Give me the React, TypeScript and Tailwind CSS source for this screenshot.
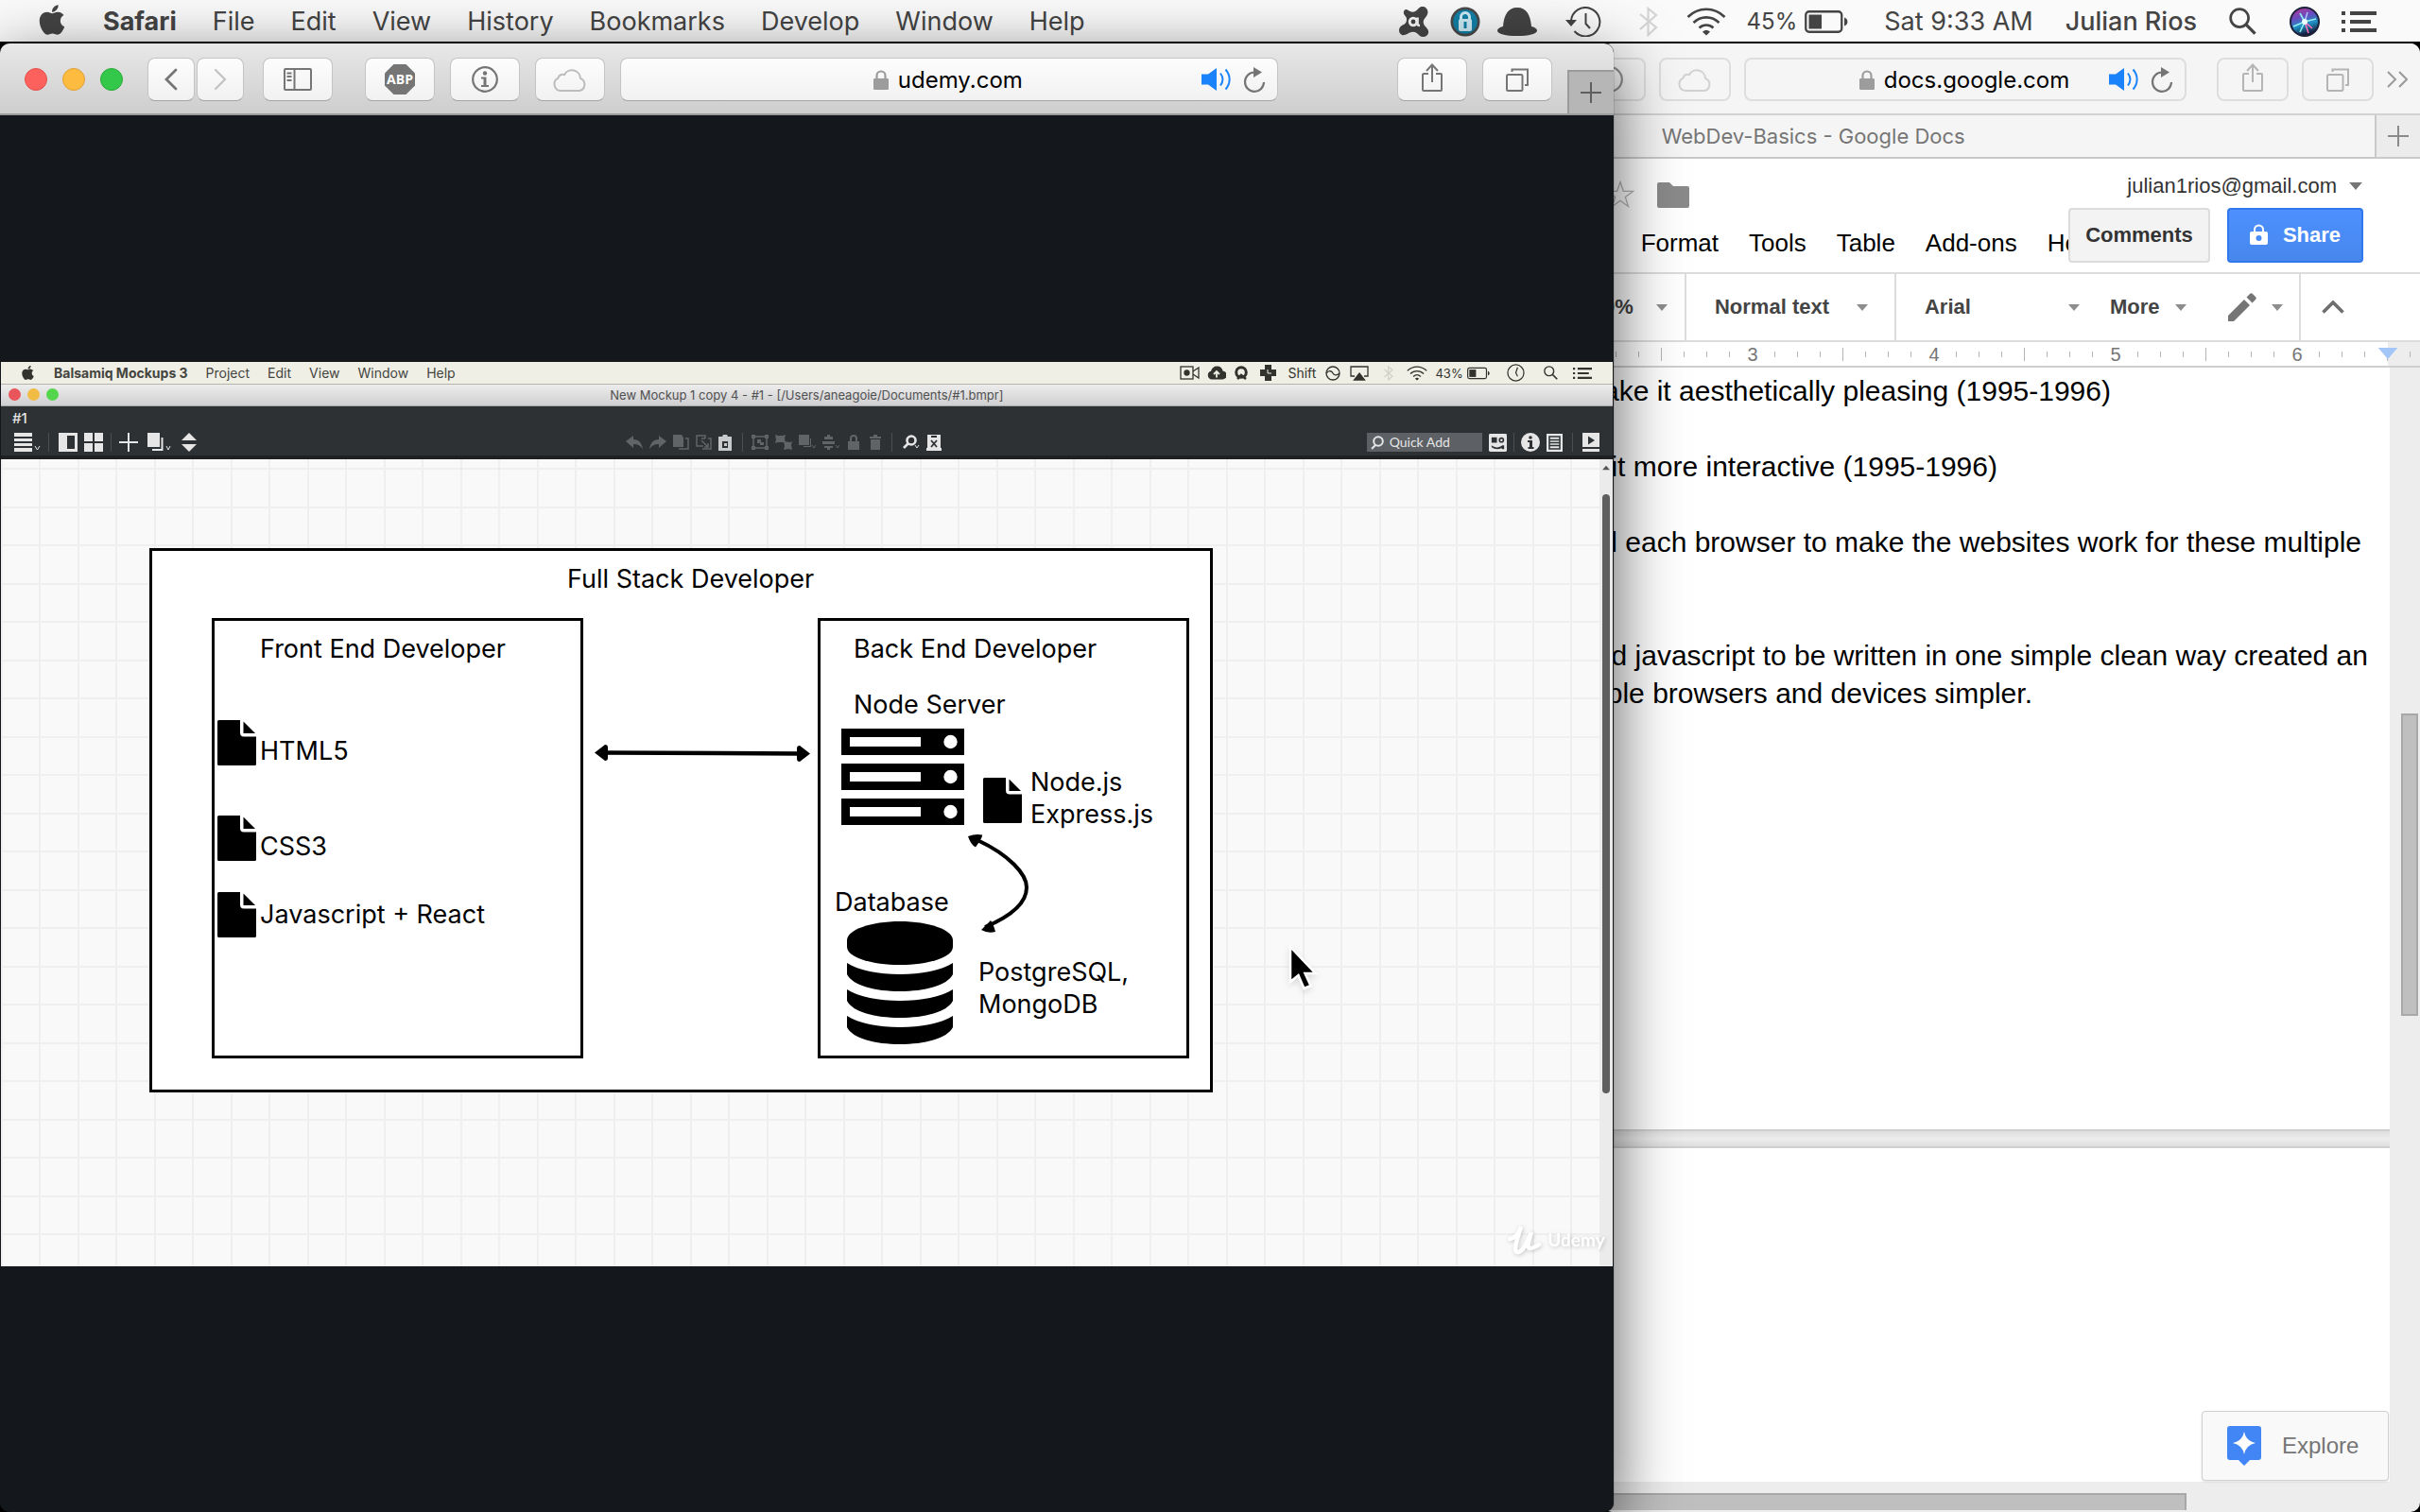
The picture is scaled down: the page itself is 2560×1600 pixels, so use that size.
import React from "react";
import { FaApple } from "react-icons/fa";

type SvgProps = { className?: string };

/* ---------- shared icons ---------- */

const Wifi = ({ className }: SvgProps) => (
  <svg viewBox="0 0 42 30" className={className} fill="none" stroke="currentColor" strokeWidth="2.6" aria-hidden="true">
    <path d="M1.5 10C12.5-1 29.500-1 40.500 10" />
    <path d="M7.500 16C15 8.500 27 8.500 34.500 16" />
    <path d="M13.500 21.500C18 17.500 24 17.500 28.500 21.500" />
    <path d="M21 29.500l-4-3.700c2-2.400 6-2.400 8 0z" fill="currentColor" stroke="none" />
  </svg>
);

const Bluetooth = ({ className }: SvgProps) => (
  <svg viewBox="0 0 20 32" className={className} fill="none" stroke="currentColor" strokeWidth="2.200" aria-hidden="true">
    <path d="M1 8l17 14-8.500 8V2L18 9 1 24" />
  </svg>
);

const Battery = ({ className }: SvgProps) => (
  <svg viewBox="0 0 46 24" className={className} aria-hidden="true">
    <rect x="1.250" y="1.250" width="38" height="21.500" rx="3.500" fill="none" stroke="currentColor" strokeWidth="2.300" />
    <rect x="4.500" y="4.500" width="13.500" height="15" fill="currentColor" />
    <path d="M42 7.500c4.500 1 4.500 8 0 9z" fill="currentColor" />
  </svg>
);

const Magnifier = ({ className }: SvgProps) => (
  <svg viewBox="0 0 30 30" className={className} fill="none" stroke="currentColor" strokeWidth="2.800" aria-hidden="true">
    <circle cx="11.500" cy="11.500" r="9.800" />
    <path d="M18.500 18.500l10 10" strokeWidth="3.400" />
  </svg>
);

const MenuList = ({ className }: SvgProps) => (
  <svg viewBox="0 0 37 22" className={className} fill="currentColor" aria-hidden="true">
    <path d="M0 0h4v4H0zM9 0h28v4H9zM0 9h4v4H0zM9 9h22v4H9zM0 18h4v4H0zM9 18h28v4H9z" />
  </svg>
);

const Lock = ({ className }: SvgProps) => (
  <svg viewBox="0 0 16 21" className={className} aria-hidden="true">
    <path d="M3.500 10V6a4.500 4.500 0 019 0v4" fill="none" stroke="currentColor" strokeWidth="2.200" />
    <rect y="9" width="16" height="12" rx="1.200" fill="currentColor" />
  </svg>
);

const Speaker = ({ className }: SvgProps) => (
  <svg viewBox="0 0 32 24" className={className} aria-hidden="true">
    <path d="M0 6.500h7L16 0v24L7 17.500H0z" fill="currentColor" />
    <path d="M20 5.500c3 4 3 9 0 13M25.500 1.500c5.500 6.500 5.500 14.500 0 21" fill="none" stroke="currentColor" strokeWidth="2" />
  </svg>
);

const Reload = ({ className }: SvgProps) => (
  <svg viewBox="0 0 24 28" className={className} aria-hidden="true">
    <path d="M12 6.500A10 10.200 0 1022 17" fill="none" stroke="currentColor" strokeWidth="2.200" />
    <path d="M11 1l9 5.500-9 5.500z" fill="currentColor" />
  </svg>
);

const Cloud = ({ className }: SvgProps) => (
  <svg viewBox="0 0 36 25" className={className} fill="none" stroke="currentColor" strokeWidth="2" strokeLinejoin="round" aria-hidden="true">
    <path d="M8 24a7 7 0 01-2.500-13.300A4.500 4.500 0 0112 7.200 9 9 0 0129 11a6.800 6.800 0 01-1 13z" />
  </svg>
);

const Info = ({ className }: SvgProps) => (
  <svg viewBox="0 0 28 28" className={className} aria-hidden="true">
    <circle cx="14" cy="14" r="12.800" fill="none" stroke="currentColor" strokeWidth="2.200" />
    <circle cx="14" cy="7.500" r="2.200" fill="currentColor" />
    <path d="M10 11.500h5.500V20H18v2h-8v-2h2.500v-6.500H10z" fill="currentColor" />
  </svg>
);

const Share = ({ className }: SvgProps) => (
  <svg viewBox="0 0 24 30" className={className} fill="none" stroke="currentColor" strokeWidth="2" aria-hidden="true">
    <path d="M8 11H3.500C2 11 2 12 2 12v16c0 1 1 1 1 1h18c1 0 1-1 1-1V12c0-1-1-1-1-1h-5M12 20V2M6 8l6-6.500L18 8" />
  </svg>
);

const Tabs = ({ className }: SvgProps) => (
  <svg viewBox="0 0 24 25" className={className} fill="none" stroke="currentColor" strokeWidth="2" aria-hidden="true">
    <rect x="1" y="7" width="16.500" height="17" rx="1.500" />
    <path d="M6.500 4V1.500H23V18h-3" />
  </svg>
);

const Plus = ({ className }: SvgProps) => (
  <svg viewBox="0 0 22 22" className={className} stroke="currentColor" strokeWidth="2" aria-hidden="true">
    <path d="M11 0v22M0 11h22" />
  </svg>
);

const Caret = ({ className }: SvgProps) => (
  <svg viewBox="0 0 12 7" className={className} fill="currentColor" aria-hidden="true">
    <path d="M0 0h12L6 7z" />
  </svg>
);

/* ---------- system menu bar ---------- */

const safariMenus = ["File", "Edit", "View", "History", "Bookmarks", "Develop", "Window", "Help"];

const SystemBar = () => (
  <header className="flex h-11 shrink-0 items-center bg-[#fafafa] pt-px pr-[46px] pl-[41px] text-[27px] leading-8 whitespace-nowrap text-[#444]">
    <button aria-label="Apple menu" className="mr-10 -mt-1"><FaApple className="h-9 w-7" /></button>
    <nav className="flex gap-[38px]">
      <button className="font-bold">Safari</button>
      {safariMenus.map((m) => <button key={m}>{m}</button>)}
    </nav>
    <div className="ml-auto flex items-center">
      <svg viewBox="0 0 32 32" className="mr-[22px] size-8" aria-hidden="true">
        <path d="M8 3c2 1 5 4 9 2 3-1 4-6 9-5 4 1 6 6 3 10-2 3-4 4-3 8 1 4 6 5 5 10-1 4-6 5-9 3-3-3-5-5-9-4-4 1-6 4-10 3-4-2-4-8 0-10 4-2 5-3 5-7 0-3-4-4-3-8 1-2 2-2 3-2z" fill="#444" />
        <circle cx="15" cy="16" r="3.800" fill="none" stroke="#fafafa" strokeWidth="2.800" />
        <path d="M19.500 11.500V18c0 2 1 2 2.500 2" fill="none" stroke="#fafafa" strokeWidth="2.600" />
      </svg>
      <svg viewBox="0 0 32 32" className="mr-[18px] size-8" aria-hidden="true">
        <circle cx="16" cy="16" r="15.500" fill="#4a4a4a" />
        <circle cx="16" cy="16" r="12.800" fill="#1280a6" />
        <path d="M11.500 14v-3a4.500 4.500 0 019 0v3" fill="none" stroke="#cdeaf4" strokeWidth="3" />
        <rect x="9" y="13" width="14" height="13" rx="2" fill="#cdeaf4" />
        <rect x="14.500" y="16" width="3" height="7" fill="#1280a6" />
      </svg>
      <svg viewBox="0 0 42 30" className="mr-[30px] h-[30px] w-[42px]" fill="#444" aria-hidden="true">
        <path d="M6 20C7 8 11 0 21 0s14 8 15 20c4 1 6 2.500 6 4.500 0 3.500-9 5.500-21 5.500S0 28 0 24.500C0 22.500 2 21 6 20z" />
      </svg>
      <svg viewBox="0 0 38 32" className="mr-10 h-8 w-[38px]" fill="none" stroke="#444" strokeWidth="2" aria-hidden="true">
        <path d="M6 15A15.200 15.200 0 119.500 26M21.500 7v11l4.500 5" />
        <path d="M0 14h12l-6 7z" fill="#444" stroke="none" />
      </svg>
      <Bluetooth className="mr-[30px] h-8 w-5 text-[#d4d4d4]" />
      <Wifi className="mr-[22px] h-[30px] w-[42px]" />
      <span className="mr-2 text-2xl">45%</span>
      <Battery className="mr-[38px] h-6 w-[46px]" />
      <time className="mr-[34px]">Sat 9:33 AM</time>
      <button className="mr-[34px] font-medium">Julian Rios</button>
      <Magnifier className="mr-[35px] size-[29px]" />
      <svg viewBox="0 0 32 32" className="mr-[23px] size-8" aria-hidden="true">
        <defs>
          <linearGradient id="siri" x1="0" y1="0" x2="0.300" y2="1">
            <stop offset="0" stopColor="#c0358f" />
            <stop offset="0.400" stopColor="#6a4bc0" />
            <stop offset="0.700" stopColor="#1d8fc4" />
            <stop offset="1" stopColor="#16203f" />
          </linearGradient>
        </defs>
        <circle cx="16" cy="16" r="15" fill="url(#siri)" stroke="#1c2038" strokeWidth="2" />
        <path d="M16 16L11 7M16 16L4 21M16 16l12-3M16 16l-5 11" stroke="#8ff0f0" strokeWidth="1.600" />
        <path d="M16 16l4 12M16 16l8 7" stroke="#ff6fb4" strokeWidth="1.600" />
        <path d="M16 16l3-10" stroke="#b9c8ff" strokeWidth="1.400" />
        <circle cx="16" cy="16" r="3" fill="#e8ffff" />
      </svg>
      <MenuList className="h-[22px] w-[37px]" />
    </div>
  </header>
);

/* ---------- Safari toolbar pieces ---------- */

const ToolButton = ({ label, children, className = "w-[74px]" }: { label: string; children: React.ReactNode; className?: string }) => (
  <button aria-label={label} className={`flex h-[46px] shrink-0 items-center justify-center rounded-lg border border-[#c4c4c4] border-b-[#a5a5a5] bg-linear-to-b from-[#fdfdfd] to-[#f1f1f1] text-[#757575] ${className}`}>
    {children}
  </button>
);

const FlatButton = ({ label, children }: { label: string; children: React.ReactNode }) => (
  <button aria-label={label} className="flex h-[46px] w-[76px] shrink-0 items-center justify-center rounded-lg border-2 border-[#dedede] text-[#b4b4b4]">
    {children}
  </button>
);

const AddressBar = ({ host, className }: { host: string; className: string }) => (
  <div className={`flex h-[46px] items-center rounded-lg ${className}`}>
    <div className="flex-1" />
    <label className="flex items-center gap-2.5 pl-2.5">
      <Lock className="h-[21px] w-4 text-[#9c9c9c]" />
      <input aria-label="Address" defaultValue={host} className="field-sizing-content pt-0.5 text-2xl leading-8 text-black outline-none" />
    </label>
    <div className="flex flex-1 items-center justify-end gap-3 pr-3">
      <Speaker className="h-6 w-8 text-[#1a82fb]" />
      <Reload className="h-7 w-6 text-[#757575]" />
    </div>
  </div>
);

/* ---------- video: Balsamiq ---------- */

const BalsamiqMenuBar = () => (
  <div className="flex h-6 items-center border-b border-[#b4b4aa] bg-[#efefe6] pt-px pr-[22px] pl-[21px] text-sm leading-5 whitespace-nowrap text-[#44443e]">
    <FaApple className="mr-5 h-[17px] w-[15px] shrink-0 text-[#33332e]" />
    <div className="flex gap-[19px]">
      <span className="font-bold">Balsamiq Mockups 3</span>
      {["Project", "Edit", "View", "Window", "Help"].map((m) => <span key={m}>{m}</span>)}
    </div>
    <div className="ml-auto flex items-center text-[#33332e]">
      <svg viewBox="0 0 21 15" className="mr-2 h-[15px] w-[21px]" fill="none" stroke="currentColor" strokeWidth="1.300"><rect x="1" y="1" width="13" height="13" /><path d="M14 6l6-4v11l-6-4" /><circle cx="7.500" cy="7.500" r="2.500" fill="currentColor" /></svg>
      <svg viewBox="0 0 20 14" className="mr-2 h-[15px] w-5" fill="currentColor"><path d="M5 14a4.500 4.500 0 01-1-8.800C5 2 7 0 10.500 0S16 2 16.500 5A4.500 4.500 0 0116 14z" /><path d="M10 12V6M7 8.500L10 5.500l3 3" fill="none" stroke="#efefe6" strokeWidth="1.800" /></svg>
      <svg viewBox="0 0 16 15" className="mr-3 h-[15px] w-4" fill="none" stroke="currentColor" strokeWidth="3"><circle cx="8" cy="7" r="5.300" /><path d="M4 14l4-4 5 4" strokeWidth="2.600" /></svg>
      <svg viewBox="0 0 17 17" className="mr-3 size-[17px]" fill="currentColor"><path d="M5 0h7v5h5v7h-5v5H5v-5H0V5h5z" /><path d="M8 5v4h4" stroke="#efefe6" fill="none" /></svg>
      <span className="mr-2 w-8">Shift</span>
      <svg viewBox="0 0 16 16" className="mr-2.5 size-4" fill="none" stroke="currentColor" strokeWidth="1.300"><circle cx="8" cy="8" r="7" /><path d="M1 8c3-4 6-2 7 0s4 3 7 0" /></svg>
      <svg viewBox="0 0 20 16" className="mr-4 h-4 w-5" fill="none" stroke="currentColor" strokeWidth="1.300"><path d="M5 11H1V1h18v10h-4" /><path d="M10 8l5.500 7h-11z" fill="currentColor" /></svg>
      <Bluetooth className="mr-3.5 h-4 w-[10px] text-[#cfcfc6]" />
      <Wifi className="mr-2 h-4 w-[22px]" />
      <span className="mr-1 text-[13px]">43%</span>
      <Battery className="mr-[18px] h-3.5 w-6" />
      <svg viewBox="0 0 20 20" className="mr-5 size-[19px]" fill="none" stroke="currentColor" strokeWidth="1.300"><circle cx="10" cy="10" r="9" /><path d="M12 4l-2 6 2 4" /></svg>
      <Magnifier className="mr-4 size-[15px]" />
      <MenuList className="h-3 w-5" />
    </div>
  </div>
);

const Sep = () => <span className="h-5 w-px bg-[#4b4f51]" />;

const BalsamiqToolbar = () => (
  <div className="flex h-[56px] flex-col border-b-4 border-[#1f2022] bg-[#2d3133] text-[#e6e6e6]">
    <div className="h-[25px] pl-3 text-[15px] leading-[26px] font-medium">#1</div>
    <div className="flex h-[27px] items-center pr-3.5 pl-3.5">
      <div className="flex flex-1 items-center">
        <svg viewBox="0 0 28 22" className="mr-2 h-[22px] w-7" fill="currentColor"><path d="M0 1h19v4H0zM0 7h19v3H0zM0 12h19v3H0zM0 17h19v4H0z" /><path d="M22 15l2.500 4L27 15" fill="none" stroke="currentColor" /></svg>
        <Sep />
        <svg viewBox="0 0 20 20" className="mr-[7px] ml-2.5 size-5"><path d="M0 0h20v20H0zM9 3v14h8V3z" fillRule="evenodd" fill="currentColor" /></svg>
        <svg viewBox="0 0 20 20" className="mr-2 size-5" fill="currentColor"><path d="M0 0h9v9H0zM11 0h9v9h-9zM0 11h9v9H0zM11 11h9v9h-9z" /></svg>
        <Sep />
        <svg viewBox="0 0 20 20" className="mr-2.5 ml-2 size-5" fill="none" stroke="currentColor" strokeWidth="2"><path d="M10 0v20M0 10h20" /></svg>
        <svg viewBox="0 0 26 20" className="mr-2.5 h-5 w-[26px]" fill="currentColor"><path d="M0 0h13v15H0z" /><path d="M15.500 5v13H5" fill="none" stroke="currentColor" strokeWidth="2" /><path d="M20 14l2 4 2-4" fill="none" stroke="currentColor" /></svg>
        <svg viewBox="0 0 16 20" className="h-5 w-4" fill="currentColor"><path d="M0 8l8-8 8 8zM0 12h16l-8 8z" /></svg>
      </div>
      <div className="mr-12 flex items-center gap-[7px] text-[#616466]">
        <svg viewBox="0 0 18 14" className="h-3.5 w-[18px]" fill="currentColor"><path d="M0 6l8-6v4c6 0 9 4 10 10-3-4-6-5-10-5v4z" /></svg>
        <svg viewBox="0 0 18 14" className="h-3.5 w-[18px]" fill="currentColor"><path d="M18 6l-8-6v4C4 4 1 8 0 14c3-4 6-5 10-5v4z" /></svg>
        <svg viewBox="0 0 17 16" className="h-4 w-[17px]" fill="currentColor"><path d="M0 0h9l2 3v10H0z" /><path d="M13 4h3v11H6" fill="none" stroke="currentColor" strokeWidth="1.500" /></svg>
        <svg viewBox="0 0 17 16" className="h-4 w-[17px]" fill="none" stroke="currentColor" strokeWidth="1.500"><path d="M8 12H1V1h9v3M6 4h4M13 4h3v11H7M6 6l7 7M13 9v4H9" /></svg>
        <svg viewBox="0 0 14 17" className="mr-1 h-[17px] w-3.5 text-[#c8c9ca]" fill="currentColor"><path d="M0 2h4l1-2h4l1 2h4v15H0zM4 7v7h6V7z" fillRule="evenodd" /><path d="M6 9h3v3H6z" /></svg>
        <Sep />
        <svg viewBox="0 0 18 16" className="ml-0.5 h-4 w-[18px]" fill="none" stroke="currentColor" strokeWidth="1.500"><path d="M2 2h14v12H2z" /><path d="M0 0h4v4H0zM14 0h4v4h-4zM0 12h4v4H0zM14 12h4v4h-4zM6 5h4v4H6zM9 8h4v3H9z" fill="currentColor" stroke="none" /></svg>
        <svg viewBox="0 0 18 16" className="h-4 w-[18px]" fill="currentColor"><path d="M0 0l3 1h5l3-1-1 4 1 5-3-1H3L0 9l1-4zM9 7l7 1 2-1-1 4 1 5-4-1-5 1 1-4z" /></svg>
        <svg viewBox="0 0 18 16" className="h-4 w-[18px]" fill="currentColor"><path d="M0 0h11v11H0zM12 4h1v9H5v-1h7z" /><path d="M14 11l2 3 2-3" fill="none" stroke="currentColor" /></svg>
        <svg viewBox="0 0 18 16" className="h-4 w-[18px]" fill="currentColor"><path d="M2 2h3V0h3v2h3v3H2zM0 7h13v3H0zM2 12h9v2H8v2H5v-2H2z" /><path d="M14 11l2 3 2-3" fill="none" stroke="currentColor" /></svg>
        <svg viewBox="0 0 12 16" className="ml-0.5 h-4 w-3" fill="currentColor"><path d="M0 7h12v9H0z" /><path d="M3 7V4a3 3 0 016 0v3" fill="none" stroke="currentColor" strokeWidth="2" /></svg>
        <svg viewBox="0 0 12 16" className="mx-1 h-4 w-3" fill="currentColor"><path d="M0 2h4V0h4v2h4v2H0zM1 5h10v11H1z" /></svg>
        <Sep />
        <svg viewBox="0 0 18 16" className="ml-1 h-4 w-[18px] text-[#e6e6e6]" fill="none" stroke="currentColor" strokeWidth="2.600"><circle cx="9" cy="6" r="4.500" /><path d="M6 9l-5 5" /><path d="M13 11l2 3 2-3" strokeWidth="1" /></svg>
        <svg viewBox="0 0 16 17" className="h-[17px] w-4 text-[#e6e6e6]" fill="currentColor"><path d="M1 0h14v14h1v3H0v-3h1z" /><path d="M5 2h6M5 6l6 7M11 6l-6 7" stroke="#2d3133" strokeWidth="1.800" /></svg>
      </div>
      <div className="flex flex-1 items-center justify-end">
        <label className="mr-[7px] flex h-5 w-[122px] items-center gap-1.5 bg-[#5d6065] pl-1">
          <svg viewBox="0 0 14 15" className="h-[15px] w-3.5 shrink-0" fill="none" stroke="currentColor" strokeWidth="2"><circle cx="8" cy="6" r="4.800" /><path d="M5 10l-4 4" /></svg>
          <input aria-label="Quick Add" placeholder="Quick Add" className="w-20 font-[Lato] text-sm leading-5 outline-none placeholder:text-[#e6e6e6]" />
        </label>
        <svg viewBox="0 0 20 20" className="mr-[7px] size-[19px]"><rect width="20" height="20" rx="1.500" fill="currentColor" /><g fill="#2d3133"><path d="M3 4h6v6H3z" /><circle cx="14" cy="7" r="3" /><path d="M3 13c4 3 8 3 12 0h2v4h-2l-1-1c-4 2-8 1-11-1z" /></g><circle cx="14" cy="7" r="1.300" fill="currentColor" /></svg>
        <Sep />
        <svg viewBox="0 0 20 20" className="mx-[7px] size-5"><circle cx="10" cy="10" r="10" fill="currentColor" /><g fill="#2d3133"><circle cx="10" cy="5" r="1.800" /><path d="M7 8h5v7h1.500v2h-6v-2H9v-5H7z" /></g></svg>
        <svg viewBox="0 0 17 19" className="mr-2.5 h-[19px] w-[17px]"><path d="M0 0h17v19H0z" fill="currentColor" /><path d="M3 3h11v13H3zM3 6.500h11M3 9.500h11M3 12.500h11" fill="none" stroke="#2d3133" strokeWidth="1.500" /></svg>
        <Sep />
        <svg viewBox="0 0 18 20" className="ml-2.5 h-5 w-[18px]"><path d="M0 0h18v15H0zM0 17h18v3H0z" fill="currentColor" /><path d="M6 3.500l7 4.500-7 4.500z" fill="#2d3133" /></svg>
      </div>
    </div>
  </div>
);

const FileShape = ({ className }: { className: string }) => (
  <svg viewBox="0 0 41 48" className={`absolute h-12 w-[41px] ${className}`} aria-hidden="true">
    <path d="M1.500 0H24v13.500q0 4 4 4h13v29q0 1.500-1.500 1.500h-38Q0 48 0 46.500v-45Q0 0 1.500 0z" />
    <path d="M27.500 1.500L40 14H27.500z" />
  </svg>
);

const ServerUnit = ({ y }: { y: number }) => (
  <g transform={`translate(0 ${y})`}>
    <rect width="130" height="28" />
    <rect x="9" y="9" width="75" height="10" fill="#fff" />
    <circle cx="115.500" cy="14" r="7.200" fill="#fff" />
  </g>
);

const Diagram = () => (
  <div className="absolute inset-0 text-[27px] leading-[34px] whitespace-nowrap text-black">
    <div className="absolute top-[94px] left-[157px] h-[576px] w-[1125px] border-[3px] border-black bg-white" />
    <div className="absolute top-[168px] left-[223px] h-[466px] w-[393px] border-[3px] border-black bg-white" />
    <div className="absolute top-[168px] left-[864px] h-[466px] w-[393px] border-[3px] border-black bg-white" />

    <div className="absolute top-[110px] left-[599px]">Full Stack Developer</div>
    <div className="absolute top-[184px] left-[274px]">Front End Developer</div>
    <div className="absolute top-[292px] left-[274px]">HTML5</div>
    <div className="absolute top-[393px] left-[274px]">CSS3</div>
    <div className="absolute top-[465px] left-[274px]">Javascript + React</div>
    <div className="absolute top-[184px] left-[902px]">Back End Developer</div>
    <div className="absolute top-[243px] left-[902px]">Node Server</div>
    <div className="absolute top-[325px] left-[1089px]">Node.js<br />Express.js</div>
    <div className="absolute top-[452px] left-[882px]">Database</div>
    <div className="absolute top-[526px] left-[1034px]">PostgreSQL,<br />MongoDB</div>

    <FileShape className="top-[276px] left-[229px]" />
    <FileShape className="top-[377px] left-[229px]" />
    <FileShape className="top-[458px] left-[229px]" />
    <FileShape className="top-[337px] left-[1039px]" />

    <svg viewBox="0 0 130 102" className="absolute top-[285px] left-[889px] h-[102px] w-[130px]" aria-hidden="true">
      <ServerUnit y={0} />
      <ServerUnit y={37} />
      <ServerUnit y={74} />
    </svg>

    <svg viewBox="0 0 112 130" className="absolute top-[489px] left-[895px] h-[130px] w-[112px]" aria-hidden="true">
      <path d="M0 20C0 9 25 0 56 0s56 9 56 20v7c0 11-25 19-56 19S0 38 0 27z" />
      <path d="M0 44c12 8 34 12 56 12s44-4 56-12v12c-6 12-30 18-56 18S6 68 0 56z" />
      <path d="M0 72c12 8 34 12 56 12s44-4 56-12v12c-6 12-30 18-56 18S6 96 0 84z" />
      <path d="M0 100c12 8 34 12 56 12s44-4 56-12v12c-6 12-30 18-56 18s-50-6-56-18z" />
    </svg>

    <svg viewBox="0 0 228 18" className="absolute top-[302px] left-[628px] h-[18px] w-[228px]" aria-hidden="true">
      <path d="M10 8.500L218 9.500" stroke="#000" strokeWidth="4.500" />
      <path d="M0 8.500L11 0q3 0 3 3v11q0 3-3 3zM228 9.500L217 1q-3 0-3 3v11q0 3 3 3z" />
    </svg>

    <svg viewBox="0 0 70 104" className="absolute top-[397px] left-[1023px] h-[104px] w-[70px]" aria-hidden="true">
      <path d="M10 6C44 22 62 42 62 56c0 18-20 32-44 42" fill="none" stroke="#000" strokeWidth="4" />
      <path d="M0 2q8-3 15-1.500 1 2-7 13Q3 11 0 2zM14 101L24 91q3 4 5 12-8 2-15-2z" />
    </svg>
  </div>
);

const Canvas = () => (
  <div className="relative h-[854px] overflow-hidden bg-[#f9f9f9]">
    <div className="absolute inset-0 bg-[linear-gradient(90deg,#efefef_2px,transparent_2px,transparent_40px,#efefef_40px,#efefef_42px,transparent_42px),linear-gradient(180deg,transparent_9px,#efefef_9px,#efefef_11px,transparent_11px,transparent_50px,#efefef_50px,#efefef_52px,transparent_52px)] bg-size-[81px_81px]" />
    <Diagram />
    <div className="absolute inset-y-0 right-0 flex w-3.5 flex-col items-center bg-[#ebebeb]">
      <Caret className="mt-1.5 h-1.5 w-2 rotate-180 text-[#555]" />
      <div className="mt-[25px] h-[634px] w-2 rounded-full bg-[#5e5e5e]" />
    </div>
    <svg viewBox="0 0 32 52" className="absolute top-[513px] left-[1361px] h-[52px] w-8 drop-shadow-md" aria-hidden="true">
      <path d="M3 3v37l8.500-7 6 14 7-3-6-13h11z" fill="#000" stroke="#fff" strokeWidth="2.500" />
    </svg>
    <div className="absolute right-2 bottom-3 flex items-center gap-1.5 font-[Lato] text-[19px] leading-8 font-bold text-white [filter:drop-shadow(1px_1px_2px_rgb(0_0_0_/_0.2))]">
      <svg viewBox="0 0 36 32" className="h-8 w-9" fill="none" stroke="#fff" strokeWidth="4.500" strokeLinecap="round" aria-hidden="true">
        <path d="M2 15c6-1 10-6 12-13-3 10-9 26-4 27 6 1 12-14 15-21-3 9-5 16-2 17 3 0 7-2 10-4" />
      </svg>
      Udemy
    </div>
  </div>
);

const Video = () => (
  <section aria-label="Lecture video" className="bg-[#f9f9f9]">
    <BalsamiqMenuBar />
    <div className="flex h-[23px] items-center border-b border-[#a9a9a9] bg-linear-to-b from-[#ededed] to-[#cfcfd1] px-2">
      <div className="flex flex-1 gap-[7px]">
        <span className="size-[13px] rounded-full bg-[#e9555a]" />
        <span className="size-[13px] rounded-full bg-[#f2bb44]" />
        <span className="size-[13px] rounded-full bg-[#54d64c]" />
      </div>
      <span className="pt-px text-[13px] leading-5 text-[#505050]">New Mockup 1 copy 4 - #1 - [/Users/aneagoie/Documents/#1.bmpr]</span>
      <div className="flex-1" />
    </div>
    <BalsamiqToolbar />
    <Canvas />
  </section>
);

/* ---------- left window ---------- */

const UdemyWindow = () => (
  <main className="z-10 flex min-w-0 flex-col overflow-hidden rounded-[10px] bg-[#14181c] shadow-[0_20px_70px_rgba(0,0,0,0.65),0_0_1px_#000]">
    <div className="flex h-[76px] shrink-0 items-center border-b-2 border-[#9b9b9b] bg-linear-to-b from-[#e8e8e8] to-[#cecece] pt-0.5 pl-[26px]">
      <div className="mr-[26px] flex gap-4">
        <button aria-label="Close" className="size-6 rounded-full border border-[#e2504c] bg-[#fc615d]" />
        <button aria-label="Minimize" className="size-6 rounded-full border border-[#dfa035] bg-[#fdbc40]" />
        <button aria-label="Zoom" className="size-6 rounded-full border border-[#27ab36] bg-[#34c84a]" />
      </div>
      <ToolButton label="Back" className="mr-0.5 w-[50px]">
        <svg viewBox="0 0 14 24" className="h-6 w-3.5" fill="none" stroke="currentColor" strokeWidth="2.800" strokeLinecap="round"><path d="M12 2L2 12l10 10" /></svg>
      </ToolButton>
      <ToolButton label="Forward" className="mr-5 w-[50px]">
        <svg viewBox="0 0 14 24" className="h-6 w-3.5 text-[#c2c2c2]" fill="none" stroke="currentColor" strokeWidth="2.200" strokeLinecap="round"><path d="M2 2l10 10L2 22" /></svg>
      </ToolButton>
      <ToolButton label="Sidebar" className="mr-[34px] w-[74px]">
        <svg viewBox="0 0 30 24" className="h-6 w-[30px]" fill="none" stroke="currentColor" strokeWidth="2"><rect x="1" y="1" width="28" height="22" rx="1" /><path d="M11.500 1v22M3.500 5.500h5M3.500 9h5M3.500 13h5" /></svg>
      </ToolButton>
      <ToolButton label="Adblock Plus" className="mr-4 w-[74px]">
        <svg viewBox="0 0 32 32" className="size-8" aria-hidden="true">
          <path d="M9.500 0h13L32 9.500v13L22.500 32h-13L0 22.500v-13z" fill="currentColor" />
          <text x="16" y="21" textAnchor="middle" fontSize="14" fontWeight="700" fontFamily="Open Sans" fill="#fff">ABP</text>
        </svg>
      </ToolButton>
      <ToolButton label="Page info" className="mr-4 w-[74px]"><Info className="size-7" /></ToolButton>
      <ToolButton label="iCloud tabs" className="mr-4 w-[74px]"><Cloud className="h-[25px] w-9 text-[#bdbdbd]" /></ToolButton>
      <AddressBar host="udemy.com" className="min-w-0 flex-1 border border-[#c4c4c4] border-b-[#a5a5a5] bg-linear-to-b from-[#fdfdfd] to-[#f1f1f1]" />
      <ToolButton label="Share" className="mr-4 ml-[126px] w-[74px]"><Share className="mb-1 h-[30px] w-6" /></ToolButton>
      <ToolButton label="Show tabs" className="mr-4 w-[74px]"><Tabs className="h-[25px] w-6" /></ToolButton>
      <button aria-label="New tab" className="flex h-[46px] w-[49px] items-center justify-center self-end border-t-2 border-l-2 border-[#9b9b9b] bg-[#b6b6b6] text-[#5f5f5f]">
        <Plus className="size-[22px]" />
      </button>
    </div>
    <div className="flex flex-1 flex-col justify-center px-px">
      <Video />
    </div>
  </main>
);

/* ---------- right window: Google Docs ---------- */

const docsMenus = ["Format", "Tools", "Table", "Add-ons", "Help"];

const Picker = ({ label, value, className }: { label: string; value: string; className: string }) => (
  <span className={`flex items-center justify-between ${className}`}>
    <select aria-label={label} className="appearance-none bg-transparent font-bold outline-none">
      <option>{value}</option>
    </select>
    <Caret className="h-[7px] w-3 text-[#8d8d8d]" />
  </span>
);

const rulerCells = Array.from({ length: 36 }, (_, i) => 35 - i);

const Ruler = () => (
  <div className="flex h-[27px] shrink-0 items-center justify-end overflow-hidden border-b-2 border-[#cfcfcf] bg-[linear-gradient(270deg,#ededed_34px,#fff_34px)] text-xl leading-6 text-[#767676] font-['Liberation_Sans',sans-serif]">
    <div className="-mr-0.5 flex items-center">
      {rulerCells.map((k) => {
        const isInch = k >= 5 && (k - 5) % 8 === 0;
        const isHalf = (k - 1) % 8 === 0;
        return (
          <span key={k} className="relative flex w-6 shrink-0 items-center justify-center">
            {isInch ? 6 - (k - 5) / 8 : <i className={isHalf ? "h-3.5 w-px bg-[#b5b5b5]" : "h-1.5 w-px bg-[#b5b5b5]"} />}
            {k === 1 && <Caret className="absolute top-0 h-3 w-[22px] text-[#a4c5f7]" />}
          </span>
        );
      })}
    </div>
  </div>
);

const DocsWindow = () => (
  <aside className="-ml-3 flex min-w-0 flex-col overflow-hidden rounded-[10px] bg-[#ededed] whitespace-nowrap">
    <div className="flex h-[76px] shrink-0 items-center justify-end overflow-hidden border-b-2 border-[#d2d2d2] bg-[#f5f5f5] pt-0.5 pr-[13px]">
      <div className="mr-3.5"><FlatButton label="Page info"><Info className="size-7 text-[#8f8f8f]" /></FlatButton></div>
      <div className="mr-3.5"><FlatButton label="iCloud tabs"><Cloud className="h-[25px] w-9 text-[#d2d2d2]" /></FlatButton></div>
      <AddressBar host="docs.google.com" className="w-[468px] shrink-0 border-2 border-[#dedede]" />
      <div className="mr-3.5 ml-8"><FlatButton label="Share"><Share className="mb-1 h-[30px] w-6" /></FlatButton></div>
      <div className="mr-3.5"><FlatButton label="Show tabs"><Tabs className="h-[25px] w-6" /></FlatButton></div>
      <button aria-label="More toolbar items" className="text-[#9a9a9a]">
        <svg viewBox="0 0 22 18" className="h-[18px] w-[22px]" fill="none" stroke="currentColor" strokeWidth="2"><path d="M1 1l8 8-8 8M13 1l8 8-8 8" /></svg>
      </button>
    </div>

    <div className="flex h-[46px] shrink-0 border-b-2 border-[#c9c9c9] bg-[#f5f5f5]">
      <div className="flex flex-1 items-center pl-[63px] text-[22px] leading-8 text-[#757575]">WebDev-Basics - Google Docs</div>
      <button aria-label="New tab" className="flex w-12 items-center justify-center border-l-2 border-[#c9c9c9] bg-[#ececec] text-[#8a8a8a]"><Plus className="size-[22px]" /></button>
    </div>

    <div className="flex h-[122px] shrink-0 border-b-2 border-[#dcdcdc] bg-white font-['Liberation_Sans',sans-serif]">
      <div className="min-w-0 flex-1 overflow-hidden pt-[22px]">
        <div className="flex h-8 items-center gap-6 pl-1">
          <svg viewBox="0 0 30 30" className="h-[30px] w-[30px]" fill="none" stroke="#b5b5b5" strokeWidth="1.300"><path d="M15 1.500l3.300 9.800h10.500l-8.500 6.200 3.200 10-8.500-6.200-8.500 6.200 3.200-10-8.500-6.200h10.500z" /></svg>
          <svg viewBox="0 0 34 27" className="h-[27px] w-[34px]" fill="#8a8a8a"><path d="M2 0h11l4 4h15q2 0 2 2v19q0 2-2 2H2q-2 0-2-2V2q0-2 2-2z" /></svg>
        </div>
        <nav className="mt-5 flex gap-8 pl-[41px] text-[26px] leading-[30px] text-black">
          {docsMenus.map((m) => <button key={m}>{m}</button>)}
        </nav>
      </div>
      <div className="flex shrink-0 flex-col items-end pt-[14px] pr-[60px]">
        <button className="flex items-center gap-3 text-[22px] leading-[30px] text-[#333]">
          julian1rios@gmail.com <Caret className="h-2 w-4 text-[#757575]" />
        </button>
        <div className="mt-2 flex gap-[18px] text-[22px] font-bold">
          <button className="h-[58px] w-[150px] rounded-sm border-2 border-[#dcdcdc] bg-[#f3f3f3] pb-0.5 text-[#333]">Comments</button>
          <button className="flex h-[58px] w-[144px] items-center justify-center gap-4 rounded-sm border-2 border-[#3079ed] bg-linear-to-b from-[#4d90fe] to-[#4787ed] pb-0.5 text-white">
            <svg viewBox="0 0 19 22" className="h-[22px] w-[19px]"><path d="M5 9V6a4.500 4.500 0 019 0v3" fill="none" stroke="#fff" strokeWidth="2" /><rect y="8" width="19" height="14" rx="2" fill="#fff" /><circle cx="9.500" cy="15" r="3" fill="#4a8cf6" /></svg>
            Share
          </button>
        </div>
      </div>
    </div>

    <div className="flex h-[72px] shrink-0 justify-end overflow-hidden border-b-2 border-[#dcdcdc] bg-white text-[22px] leading-[30px] font-bold text-[#444] font-['Liberation_Sans',sans-serif]">
      <Picker label="Zoom" value="0%" className="w-[90px] shrink-0 border-r-2 border-[#dcdcdc] pr-[18px] pl-0.5" />
      <Picker label="Paragraph style" value="Normal text" className="w-[222px] shrink-0 border-r-2 border-[#dcdcdc] pr-7 pl-[30px]" />
      <div className="flex w-[428px] shrink-0 items-center border-r-2 border-[#dcdcdc] pl-[30px]">
        <Picker label="Font" value="Arial" className="mr-8 w-[164px]" />
        <button className="mr-11 flex items-center gap-4">More <Caret className="h-[7px] w-3 text-[#8d8d8d]" /></button>
        <button aria-label="Editing mode" className="flex items-center gap-4">
          <svg viewBox="0 0 30 30" className="size-[30px]" fill="#757575"><path d="M0 30v-6L17 7l6 6L6 30zM19.500 4.500L23 1q1.500-1.500 3 0l3 3q1.500 1.500 0 3l-3.500 3.500z" /></svg>
          <Caret className="h-[7px] w-3 text-[#8d8d8d]" />
        </button>
      </div>
      <button aria-label="Hide menus" className="w-[126px] shrink-0 pl-[22px]">
        <svg viewBox="0 0 24 14" className="h-3.5 w-6" fill="none" stroke="#6f6f6f" strokeWidth="3.600"><path d="M1.500 12.500L12 2l10.500 10.500" /></svg>
      </button>
    </div>

    <Ruler />

    <div className="flex min-h-0 flex-1">
      <div className="relative flex min-w-0 flex-1 flex-col">
        <article className="flex h-[808px] flex-col items-end overflow-hidden border-b-2 border-[#cfcfcf] bg-white pt-[5px] text-[30px] leading-10 text-black font-['Liberation_Sans',sans-serif]">
          <p className="mb-10 pr-[295px]">ake it aesthetically pleasing (1995-1996)</p>
          <p className="mb-10 pr-[415px]">it more interactive (1995-1996)</p>
          <p className="mb-20 pr-[30px]">d each browser to make the websites work for these multiple</p>
          <p className="pr-[23px]">d javascript to be written in one simple clean way created an</p>
          <p className="pr-[378px]">ble browsers and devices simpler.</p>
        </article>
        <div className="h-4 shrink-0 bg-linear-to-b from-[#dedede] via-[#ededed] to-[#dedede]" />
        <div className="flex-1 border-t-2 border-[#cfcfcf] bg-white" />
        <div className="flex h-8 shrink-0 items-end pb-0.5">
          <div className="h-[18px] w-[618px] border-t-2 border-r-2 border-[#a8a8a8] bg-[#bfbfbf]" />
        </div>
        <button className="absolute right-px bottom-[33px] flex h-[74px] w-[198px] items-center gap-[22px] rounded-sm border border-[#d0d0d0] bg-[#f9f9f9] pl-[26px] text-2xl text-[#757575] shadow-sm font-['Liberation_Sans',sans-serif]">
          <svg viewBox="0 0 36 42" className="h-[42px] w-9" aria-hidden="true">
            <path d="M3 0h30q3 0 3 3v30q0 3-3 3H24l-6 6-6-6H3q-3 0-3-3V3q0-3 3-3z" fill="#4285f4" />
            <path d="M18 6q2 10 12 12-10 2-12 12-2-10-12-12 10-2 12-12z" fill="#fff" />
          </svg>
          Explore
        </button>
      </div>
      <div className="w-8 shrink-0 pl-3 pt-[366px]">
        <div className="h-80 w-[18px] border-2 border-[#a8a8a8] bg-[#bfbfbf]" />
      </div>
    </div>
  </aside>
);

export default function App() {
  return (
    <div className="flex min-h-screen flex-col bg-black font-[Inter,sans-serif]">
      <SystemBar />
      <div className="grid flex-1 grid-cols-[2fr_1fr] pt-0.5">
        <UdemyWindow />
        <DocsWindow />
      </div>
    </div>
  );
}
